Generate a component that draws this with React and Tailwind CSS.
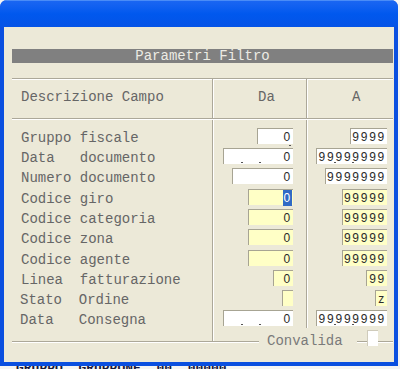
import React from 'react';

const mono = { fontFamily: '"Liberation Mono", "Courier New", monospace' };

const rows = [
  { label: 'Gruppo fiscale', h: 20, da: { w: 36, v: '0', tick: true }, a: { w: 37, v: '9999' } },
  { label: 'Data   documento', h: 20, da: { w: 70, v: '0', dots: true }, a: { w: 71, v: '99999999', dots: true } },
  { label: 'Numero documento', h: 21, da: { w: 61, v: '0' }, a: { w: 62, v: '9999999' } },
  { label: 'Codice giro', h: 20, yellow: true, da: { w: 45, v: '0', selected: true }, a: { w: 45, v: '99999' } },
  { label: 'Codice categoria', h: 20, yellow: true, da: { w: 45, v: '0' }, a: { w: 45, v: '99999' } },
  { label: 'Codice zona', h: 21, yellow: true, da: { w: 45, v: '0' }, a: { w: 45, v: '99999' } },
  { label: 'Codice agente', h: 20, yellow: true, da: { w: 45, v: '0' }, a: { w: 45, v: '99999' } },
  { label: 'Linea  fatturazione', h: 20, yellow: true, da: { w: 20, v: '0' }, a: { w: 21, v: '99' } },
  { label: 'Stato  Ordine', h: 20, yellow: true, shift: true, da: { w: 11, v: '' }, a: { w: 12, v: 'z' } },
  { label: 'Data   Consegna', h: 16, shift: true, da: { w: 70, v: '0', dots: true }, a: { w: 71, v: '99999999', dots: true } },
];

const Field = ({ f, yellow }) => (
  <div
    className={`relative flex h-[16px] items-center justify-end border-t border-l border-[#a7a493] pr-[1px] text-[12px] leading-[16px] tracking-[1.75px] text-[#2b2b2b] ${yellow ? 'bg-[#ffffc6]' : 'bg-white'}`}
    style={{ width: f.w, fontFamily: '"Liberation Sans", Arial, sans-serif' }}
  >
    {f.selected ? (
      <span className="flex h-[16px] items-center bg-[#316ac5] pl-[1px] text-white">{f.v}</span>
    ) : (
      <span>{f.v}</span>
    )}
    {f.dots && (
      <>
        <span className="absolute bottom-[1px] left-[17px] h-[1px] w-[2px] bg-[#555]" />
        <span className="absolute bottom-[1px] left-[35px] h-[1px] w-[2px] bg-[#555]" />
      </>
    )}
    {f.tick && <span className="absolute -bottom-[2px] right-[2px] h-[1px] w-[2px] bg-[#555]" />}
  </div>
);

export default function App() {
  return (
    <div className="h-[369px] w-[400px] overflow-hidden bg-[#f4f4f4]">
      <div className="w-[398px] overflow-hidden rounded-t-[7px] bg-[#0a4fe0]">
        {/* title bar */}
        <div className="h-[27px] border-t border-[#4a8cf7] bg-gradient-to-b from-[#1a66f2] via-[#0058ee] to-[#0553e6]" />
        <div className="mx-[4px] mb-[4px] h-[335px] bg-[#ece9d8] pt-[22px] pl-[8px] pr-[1px]" style={mono}>
          <div className="flex h-[14px] items-center justify-center bg-[#808080] text-[14px] leading-[14px] text-[#ecebe4]">
            Parametri Filtro
          </div>

          {/* header */}
          <div className="mt-[15px] grid grid-cols-[200px_94px_87px] border-t border-b border-[#aca899] text-[14px] leading-[16px] text-[#666] shadow-[inset_0_1px_0_#fff,0_1px_0_#fff]">
            <div className="h-[39px] pt-[10px] pl-[9px]">Descrizione Campo</div>
            <div className="h-[39px] border-l border-[#aca899] pt-[10px] pl-[45px] shadow-[inset_1px_0_0_#fff]">Da</div>
            <div className="h-[39px] border-l border-[#aca899] pt-[10px] pl-[45px] shadow-[inset_1px_0_0_#fff]">A</div>
          </div>

          {/* body */}
          <div className="mt-[1px] grid grid-cols-[200px_94px_87px] border-b border-[#aca899] text-[14px] text-[#666] shadow-[0_1px_0_#fff]">
            <div className="pt-[8px] pb-[15px]">
              {rows.map((r) => (
                <div key={r.label} style={{ height: r.h }}>
                  <div className={`h-[16px] whitespace-pre pt-[2px] leading-[16px] ${r.shift ? 'pl-[8px]' : 'pl-[9px]'}`}>{r.label}</div>
                </div>
              ))}
            </div>
            <div className="flex flex-col items-end border-l border-[#aca899] pt-[8px] pr-[13px] pb-[15px] shadow-[inset_1px_0_0_#fff]">
              {rows.map((r) => (
                <div key={r.label} style={{ height: r.h }}>
                  <Field f={r.da} yellow={r.yellow} />
                </div>
              ))}
            </div>
            <div className="flex flex-col items-end border-l border-[#aca899] pt-[8px] pr-[6px] pb-[15px] shadow-[inset_1px_0_0_#fff]">
              {rows.map((r) => (
                <div key={r.label} style={{ height: r.h }}>
                  <Field f={r.a} yellow={r.yellow} />
                </div>
              ))}
            </div>
          </div>

          {/* Convalida group label on bottom line */}
          <div className="relative -mt-[14px] flex h-[24px]">
            <div className="w-[247px]" />
            <div className="h-[24px] w-[98px] bg-[#ece9d8] pt-[5px] pl-[8px] text-[14px] leading-[16px] text-[#7a7a7a]">
              Convalida
            </div>
            <div className="w-[10px]" />
            <div className="mt-[2px] h-[16px] w-[11px] border-t border-l border-[#cfcbbb] bg-white" />
          </div>
        </div>
      </div>
      <div className="h-[3px] overflow-hidden pl-[16px] text-[13px] font-bold leading-[10px] text-[#1a1a3a]" style={mono}>
        <div className="-mt-[2px] whitespace-pre">GRUPPO  GRUPPONE  00  00000</div>
      </div>
    </div>
  );
}
